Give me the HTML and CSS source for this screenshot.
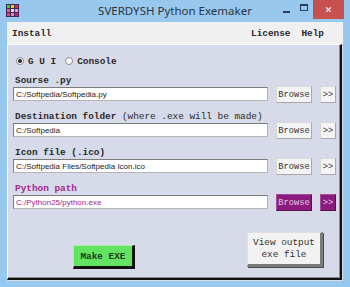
FILE: index.html
```html
<!DOCTYPE html>
<html lang="en">
<head>
    <meta charset="UTF-8">
    <title>SVERDYSH Python Exemaker</title>
    <link rel="stylesheet" href="styles.css">
</head>
<body>
    <div class="window">
        <div class="titlebar">
            <div class="tb-left">
                <svg class="app-icon" width="13" height="13" viewBox="0 0 13 13">
                    <rect x="0" y="0" width="13" height="13" fill="#3a2a5a"/>
                    <rect x="1" y="1" width="3" height="3" fill="#3bd23b"/>
                    <rect x="5" y="1" width="3" height="3" fill="#f0d020"/>
                    <rect x="9" y="1" width="3" height="3" fill="#e03030"/>
                    <rect x="1" y="5" width="3" height="3" fill="#f06060"/>
                    <rect x="5" y="5" width="3" height="3" fill="#e8e0f0"/>
                    <rect x="9" y="5" width="3" height="3" fill="#f0a0c0"/>
                    <rect x="1" y="9" width="3" height="3" fill="#e04080"/>
                    <rect x="5" y="9" width="3" height="3" fill="#f080b0"/>
                    <rect x="9" y="9" width="3" height="3" fill="#d02060"/>
                </svg>
            </div>
            <div class="title">SVERDYSH Python Exemaker</div>
            <div class="tb-right">
                <div class="ctl"><span class="min-glyph"></span></div>
                <div class="ctl"><span class="max-glyph"></span></div>
                <div class="ctl close">&#x2715;</div>
            </div>
        </div>

        <div class="client">
            <div class="menubar">
                <span class="menu-item">Install</span>
                <span class="menu-spacer"></span>
                <span class="menu-item">License</span>
                <span class="menu-item">Help</span>
            </div>

            <div class="panel">
                <div class="mode">
                    <span class="radio checked"></span>
                    <span class="mode-label">G U I</span>
                    <span class="radio second"></span>
                    <span class="mode-label">Console</span>
                </div>

                <div class="field">
                    <div class="label">Sourse .py</div>
                    <div class="row">
                        <input class="path" type="text" value="C:/Softpedia/Softpedia.py">
                        <button class="btn browse">Browse</button>
                        <button class="btn more">&gt;&gt;</button>
                    </div>
                </div>

                <div class="field">
                    <div class="label">Destination folder <span class="hint">(where .exe will be made)</span></div>
                    <div class="row">
                        <input class="path" type="text" value="C:/Softpedia">
                        <button class="btn browse">Browse</button>
                        <button class="btn more">&gt;&gt;</button>
                    </div>
                </div>

                <div class="field">
                    <div class="label">Icon file (.ico)</div>
                    <div class="row">
                        <input class="path" type="text" value="C:/Softpedia Files/Softpedia Icon.ico">
                        <button class="btn browse">Browse</button>
                        <button class="btn more">&gt;&gt;</button>
                    </div>
                </div>

                <div class="field python">
                    <div class="label">Python path</div>
                    <div class="row">
                        <input class="path" type="text" value="C:/Python25/python.exe">
                        <button class="btn browse">Browse</button>
                        <button class="btn more">&gt;&gt;</button>
                    </div>
                </div>

                <div class="actions">
                    <button class="make">Make EXE</button>
                    <button class="view">View output<br>exe file</button>
                </div>
            </div>
        </div>
    </div>
</body>
</html>
```

FILE: styles.css
```css
body {
    margin: 0;
    padding: 0;
    background: #99c8ee;
}

.window {
    width: 350px;
    height: 287px;
    background: #99c8ee;
    display: flex;
    flex-direction: column;
    box-sizing: border-box;
    padding-bottom: 6px;
}

.titlebar {
    height: 22px;
    display: grid;
    grid-template-columns: 1fr auto 1fr;
    align-items: start;
}

.tb-left {
    padding: 4px 0 0 6px;
}

.app-icon {
    display: block;
}

.title {
    font-family: "Noto Sans", sans-serif;
    font-size: 11.5px;
    line-height: 22px;
    color: #2c3440;
}

.tb-right {
    display: flex;
    justify-content: flex-end;
    padding-right: 6px;
}

.ctl {
    width: 18px;
    height: 19px;
    display: flex;
    justify-content: center;
    align-items: flex-start;
}

.min-glyph {
    width: 7px;
    height: 2px;
    background: #2a3f57;
    margin-top: 11px;
}

.max-glyph {
    width: 6px;
    height: 4px;
    border: 1px solid #2a3f57;
    border-top-width: 2px;
    margin-top: 4px;
}

.ctl.close {
    width: 31px;
    background: #c75050;
    color: #fff;
    font-family: "DejaVu Sans", sans-serif;
    font-size: 9px;
    font-weight: bold;
    align-items: center;
}

.client {
    flex: 1;
    margin: 0 7px;
    background: #d6dae9;
    display: flex;
    flex-direction: column;
    padding: 0 1px 1px 0;
}

.menubar {
    height: 22px;
    background: #f0f0f0;
    display: flex;
    align-items: center;
    padding: 0 19px 0 5px;
    margin-right: -1px;
    font-family: "Liberation Mono", monospace;
    font-size: 9.4px;
    font-weight: bold;
    color: #2a2a2a;
}

.menu-spacer {
    flex: 1;
}

.menu-item + .menu-item {
    margin-left: 11px;
}

.panel {
    flex: 1;
    background: #d6dae9;
    border-top: 1px solid #fff;
    border-left: 1px solid #fff;
    border-right: 2px solid #101010;
    border-bottom: 2px solid #101010;
    box-shadow: inset -1px -1px 0 #8a8a8a;
    padding: 10px 0 0 5px;
    font-family: "Liberation Mono", monospace;
    font-size: 9.4px;
    color: #2a2a2a;
}

.mode {
    height: 12px;
    display: flex;
    align-items: center;
    margin-bottom: 8px;
    font-weight: bold;
}

.radio {
    width: 6px;
    height: 6px;
    border: 1px solid #8a8a8a;
    border-radius: 50%;
    background: #fff;
    margin: 0 4px 0 3px;
    position: relative;
}

.radio.checked::after {
    content: "";
    position: absolute;
    left: 1px;
    top: 1px;
    width: 4px;
    height: 4px;
    border-radius: 50%;
    background: #222;
}

.radio.second {
    margin-left: 9px;
}

.field {
    margin-bottom: 8px;
}

.label {
    height: 11px;
    line-height: 11px;
    padding-left: 2px;
    font-weight: bold;
}

.hint {
    font-weight: normal;
}

.row {
    height: 17px;
    display: flex;
    align-items: flex-start;
}

.path {
    width: 255px;
    height: 14px;
    margin: 1px 0 0 0;
    padding: 0 2px;
    box-sizing: border-box;
    border: 1px solid #b4b4b4;
    border-top-color: #7c7c7c;
    border-left-color: #7c7c7c;
    background: #fff;
    font-family: "Liberation Sans", sans-serif;
    font-size: 8px;
    color: #222;
    outline: none;
}

.btn {
    height: 17px;
    margin: 0 0 0 8px;
    padding: 0;
    box-sizing: border-box;
    border: 1px solid #d8d8d8;
    border-right-color: #a8a8a8;
    border-bottom-color: #a8a8a8;
    background: #f4f4f4;
    font-family: "Liberation Mono", monospace;
    font-size: 8.7px;
    color: #333;
}

.browse {
    width: 36px;
}

.more {
    width: 16px;
}

.python .label {
    color: #a3278f;
}

.python .path {
    color: #a3278f;
}

.python .btn {
    background: #8b1b7d;
    border-color: #a54a99;
    border-right-color: #5a0f50;
    border-bottom-color: #5a0f50;
    color: #e6c6e2;
}

.actions {
    display: flex;
    align-items: flex-start;
    margin-top: 21px;
    padding-left: 60px;
}

.make {
    width: 62px;
    height: 24px;
    margin-top: 13px;
    padding: 0;
    box-sizing: border-box;
    background: #62e462;
    border: 1px solid #a8f0a8;
    border-right: 3px solid #101010;
    border-bottom: 3px solid #101010;
    font-family: "Liberation Mono", monospace;
    font-size: 9.4px;
    font-weight: bold;
    color: #1c3a1c;
}

.view {
    width: 76px;
    height: 35px;
    margin-left: 112px;
    padding: 0;
    box-sizing: border-box;
    background: #f2f2f2;
    border: 1px solid #e0e0e0;
    border-right: 3px solid #7c7c7c;
    border-bottom: 3px solid #7c7c7c;
    box-shadow: 1px 1px 0 #4a4a4a;
    font-family: "Liberation Mono", monospace;
    font-size: 9.4px;
    line-height: 12px;
    color: #333;
}
```
